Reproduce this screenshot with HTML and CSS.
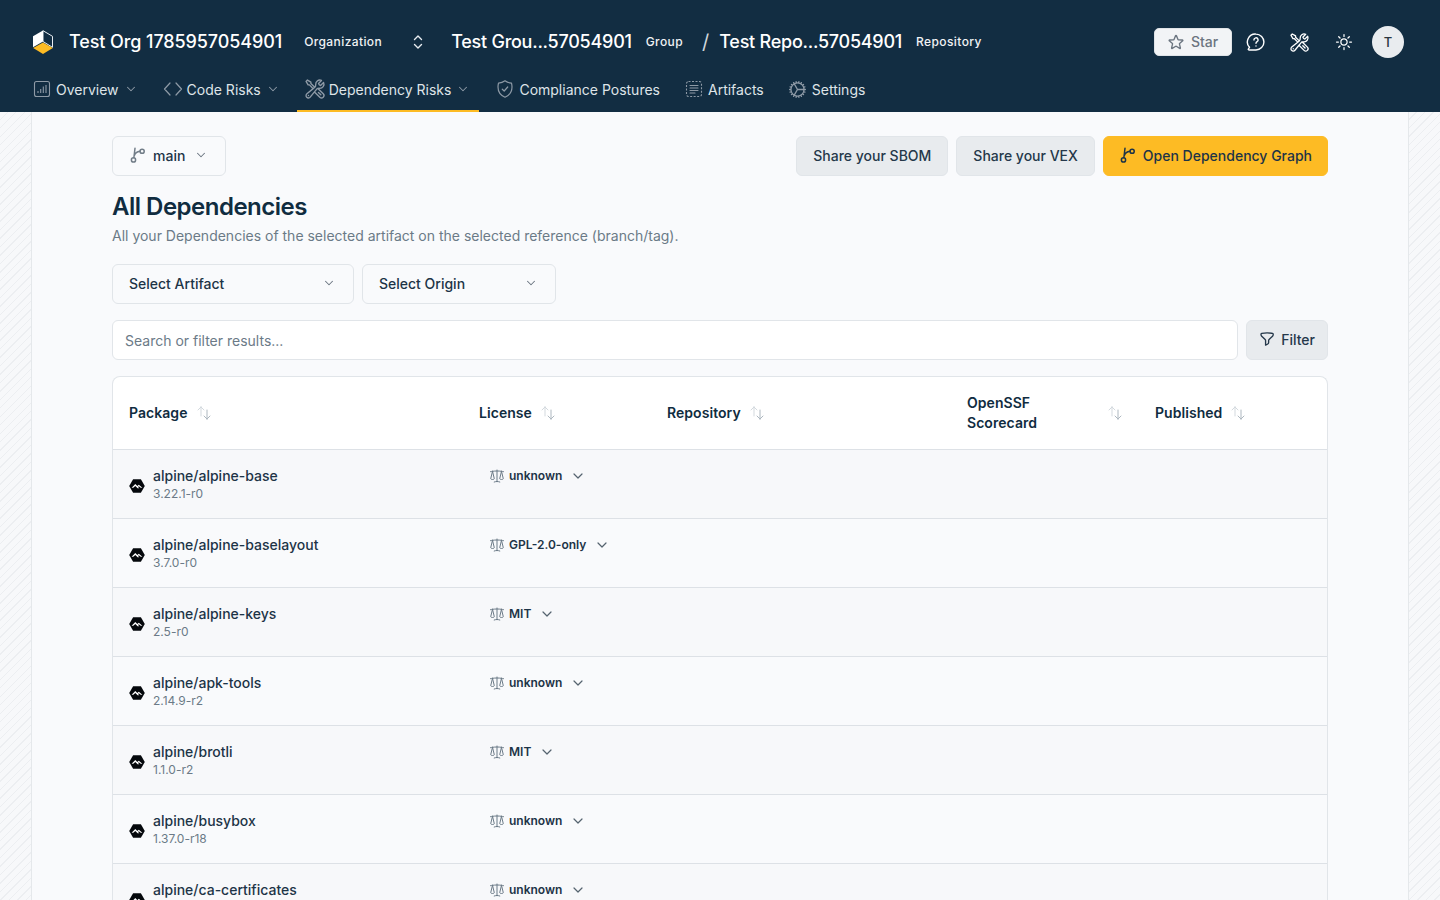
FILE: index.html
```html
<!DOCTYPE html>
<html lang="en">
<head>
    <meta charset="UTF-8">
    <meta name="viewport" content="width=device-width, initial-scale=1.0">
    <title>All Dependencies</title>
    <link rel="stylesheet" href="styles.css">
</head>
<body>
    <svg class="defs" width="0" height="0">
        <defs>
            <symbol id="chev" viewBox="0 0 20 20"><path d="M5 7.500l5 5 5-5" fill="none" stroke="currentColor" stroke-width="1.500" stroke-linecap="round" stroke-linejoin="round"/></symbol>
            <symbol id="branch" viewBox="0 0 24 24"><g fill="none" stroke="currentColor" stroke-width="2"><circle cx="6" cy="18.500" r="2.800"/><circle cx="17.500" cy="7" r="2.800"/><path d="M6.500 15.700L8 3M7.300 12.500c.8-3 3.500-5 7.400-5.500" stroke-linecap="round"/></g></symbol>
            <symbol id="sort" viewBox="0 0 24 24"><g fill="none" stroke-width="1.500" stroke-linecap="round" stroke-linejoin="round"><path d="M3 7.500L7.500 3M7.500 3L12 7.500M7.500 3v13.500" stroke="#d3d9de"/><path d="M21 16.500L16.500 21M16.500 21L12 16.500M16.500 21V7.500" stroke="#aeb8c0"/></g></symbol>
            <symbol id="scale" viewBox="0 0 24 24"><path fill="none" stroke="currentColor" stroke-width="1.500" stroke-linecap="round" stroke-linejoin="round" d="M12 3v17.250m0 0c-1.472 0-2.882.265-4.185.75M12 20.250c1.472 0 2.882.265 4.185.75M18.750 4.970A48.416 48.416 0 0 0 12 4.500c-2.291 0-4.545.16-6.750.47m13.500 0c1.010.143 2.010.317 3 .52m-3-.52 2.620 10.726c.122.499-.106 1.028-.589 1.202a5.988 5.988 0 0 1-2.031.352 5.988 5.988 0 0 1-2.031-.352c-.483-.174-.711-.703-.59-1.202L18.750 4.971Zm-16.500.52c.99-.203 1.990-.377 3-.52m0 0 2.620 10.726c.122.499-.106 1.028-.589 1.202a5.989 5.989 0 0 1-2.031.352 5.989 5.989 0 0 1-2.031-.352c-.483-.174-.711-.703-.59-1.202L5.250 4.971Z"/></symbol>
            <symbol id="alpine" viewBox="0 0 16 16"><path d="M4.100 1.300h7.800L15.800 8l-3.900 6.700H4.100L.2 8z" fill="#05080c"/><path d="M2.600 9.800l3.700-3.700 2 2 1.500-1.400 3.600 3.100h-1.700l-1.900-1.500-.8.800 1.300 1.200H8.600L6.300 8 4.300 9.800z" fill="#fff"/></symbol>
            <symbol id="tools" viewBox="0 0 24 24"><path fill="none" stroke="currentColor" stroke-width="1.500" stroke-linecap="round" stroke-linejoin="round" d="M11.420 15.170 17.250 21A2.652 2.652 0 0 0 21 17.250l-5.877-5.877M11.420 15.170l2.496-3.030c.317-.384.74-.626 1.208-.766M11.420 15.170l-4.655 5.653a2.548 2.548 0 1 1-3.586-3.586l6.837-5.630m5.108-.233c.55-.164 1.163-.188 1.743-.14a4.500 4.500 0 0 0 4.486-6.336l-3.276 3.277a3.004 3.004 0 0 1-2.250-2.250l3.276-3.276a4.500 4.500 0 0 0-6.336 4.486c.091 1.076-.071 2.264-.904 2.950l-.102.085m-1.745 1.437L5.909 7.500H4.500L2.250 3.750l1.500-1.500L7.500 4.500v1.409l4.260 4.260m-1.745 1.437 1.745-1.437m6.615 8.206L15.750 15.750M4.867 19.125h.008v.008h-.008v-.008Z"/></symbol>
        </defs>
    </svg>

    <header class="topbar">
        <div class="crumbs">
            <svg class="logo" width="22" height="25" viewBox="0 0 22 25">
                <path d="M11 .7l9.500 5.600v11L11 11.500z" fill="none" stroke="#e8edf1" stroke-width="1"/>
                <path d="M11 .5v11L1 17.300V6.300z" fill="#fff"/>
                <path d="M11 12.500L20.800 18 11 24 1.200 18z" fill="#fdbb24"/>
            </svg>
            <span class="crumb-name crumb-org">Test Org 1785957054901</span>
            <span class="crumb-type crumb-type-org">Organization</span>
            <svg class="updown" width="12" height="16" viewBox="0 0 12 16"><path d="M2.500 5.500L6 2l3.500 3.500M2.500 10.500L6 14l3.500-3.500" fill="none" stroke="#e8edf1" stroke-width="1.400" stroke-linecap="round" stroke-linejoin="round"/></svg>
            <span class="crumb-name crumb-group crumb-short">Test Grou...57054901</span>
            <span class="crumb-type">Group</span>
            <span class="slash">/</span>
            <span class="crumb-name crumb-short">Test Repo...57054901</span>
            <span class="crumb-type">Repository</span>
        </div>
        <div class="top-actions">
            <button class="star-btn">
                <svg width="18" height="18" viewBox="0 0 24 24"><path fill="none" stroke="currentColor" stroke-width="1.800" stroke-linecap="round" stroke-linejoin="round" d="M11.480 3.499a.562.562 0 0 1 1.040 0l2.125 5.111a.563.563 0 0 0 .475.345l5.518.442c.499.04.701.663.321.988l-4.204 3.602a.563.563 0 0 0-.182.557l1.285 5.385a.562.562 0 0 1-.84.61l-4.725-2.885a.562.562 0 0 0-.586 0L6.982 20.540a.562.562 0 0 1-.84-.61l1.285-5.386a.562.562 0 0 0-.182-.557l-4.204-3.602a.562.562 0 0 1 .321-.988l5.518-.442a.563.563 0 0 0 .475-.345L11.480 3.500Z"/></svg>
                Star
            </button>
            <svg class="top-icon" width="20" height="20" viewBox="0 0 24 24"><g fill="none" stroke="#fff" stroke-width="1.700" stroke-linecap="round" stroke-linejoin="round"><path d="M12 2.500a9.500 9.500 0 0 1 0 19H3.500c-.8 0-1-.7-.6-1.200l1.300-1.900A9.500 9.500 0 0 1 12 2.500z"/><path d="M9.500 9.500a2.500 2.500 0 1 1 3.700 2.200c-.8.400-1.200 1-1.200 1.800M12 16.600v.1"/></g></svg>
            <svg class="top-icon" width="21" height="21"><use href="#tools" color="#fff"/></svg>
            <svg class="top-icon" width="20" height="20" viewBox="0 0 24 24"><path fill="none" stroke="#fff" stroke-width="1.500" stroke-linecap="round" stroke-linejoin="round" d="M12 3v2.250m6.364.386-1.591 1.591M21 12h-2.250m-.386 6.364-1.591-1.591M12 18.750V21m-4.773-4.227-1.591 1.591M5.250 12H3m4.227-4.773L5.636 5.636M15.750 12a3.750 3.750 0 1 1-7.500 0 3.750 3.750 0 0 1 7.500 0Z"/></svg>
            <div class="avatar">T</div>
        </div>
        <nav class="tabs">
            <a class="tab tab-overview">
                <svg width="18" height="18" viewBox="0 0 18 18"><g fill="none" stroke="currentColor" stroke-width="1.100"><rect x="1.500" y="1.500" width="15" height="15" rx="2"/><path d="M5 13v-2M7.700 13V9M10.300 13V6.500M13 13V5"/></g></svg>
                Overview <svg class="tab-chev"><use href="#chev"/></svg>
            </a>
            <a class="tab">
                <svg class="code-icon" width="20" height="20" viewBox="0 0 20 20"><path fill="none" stroke="currentColor" stroke-width="1.200" stroke-linecap="round" stroke-linejoin="round" d="M7 4L1.500 10 7 16M13 4l5.500 6-5.500 6"/></svg>
                Code Risks <svg class="tab-chev"><use href="#chev"/></svg>
            </a>
            <a class="tab tab-active">
                <svg class="tab-big" width="22" height="22"><use href="#tools"/></svg>
                Dependency Risks <svg class="tab-chev"><use href="#chev"/></svg>
            </a>
            <a class="tab tab-plain">
                <svg width="18" height="18" viewBox="0 0 18 18"><path fill="none" stroke="currentColor" stroke-width="1.200" stroke-linecap="round" stroke-linejoin="round" d="M9 .8c2 1.500 4 2.200 6.500 2.400.3 1.200.5 2.500.5 3.800 0 4.700-2.900 8.500-7 10.200C4.900 15.500 2 11.700 2 7c0-1.300.2-2.600.5-3.800C5 3 7 2.300 9 .8zM6.300 9.200L8.200 11l3.500-4"/></svg>
                Compliance Postures
            </a>
            <a class="tab tab-plain">
                <svg width="18" height="18" viewBox="0 0 18 18"><g fill="none" stroke="currentColor" stroke-width="1.100"><rect x="1.500" y="1.500" width="15" height="15" rx="2" stroke-dasharray="2 1.500"/><path d="M5 5.500h8M5 8h8M5 10.500h8M5 13h5" stroke-linecap="round"/></g></svg>
                Artifacts
            </a>
            <a class="tab">
                <svg class="cog" width="21" height="21" viewBox="0 0 24 24"><path fill="none" stroke="currentColor" stroke-width="1.500" stroke-linecap="round" stroke-linejoin="round" d="M4.500 12a7.500 7.500 0 0 0 15 0m-15 0a7.500 7.500 0 1 1 15 0m-15 0H3m16.500 0H21m-1.500 0H12m-8.457 3.077 1.410-.513m14.095-5.130 1.410-.513M5.106 17.785l1.150-.964m11.490-9.642 1.149-.964M7.501 19.795l.75-1.300m7.500-12.990.75-1.300m-6.063 16.658.26-1.477m2.605-14.772.26-1.477m0 17.726-.26-1.477M10.698 4.614l-.26-1.477M16.500 19.794l-.75-1.299M7.500 4.205 12 12m6.894 5.785-1.149-.964M6.256 7.178l-1.150-.964m15.352 8.864-1.410-.513M4.954 9.435l-1.410-.514M12.002 12l-3.750 6.495"/></svg>
                Settings
            </a>
        </nav>
    </header>

    <div class="page">
        <main class="panel">
            <div class="toolbar">
                <button class="select select-branch">
                    <svg class="branch-icon" width="18" height="18"><use href="#branch"/></svg>
                    main
                    <svg class="sel-chev"><use href="#chev"/></svg>
                </button>
                <div class="toolbar-right">
                    <button class="btn">Share your SBOM</button>
                    <button class="btn">Share your VEX</button>
                    <button class="btn btn-primary">
                        <svg width="18" height="18"><use href="#branch"/></svg>
                        Open Dependency Graph
                    </button>
                </div>
            </div>

            <h1 class="title">All Dependencies</h1>
            <p class="subtitle">All your Dependencies of the selected artifact on the selected reference (branch/tag).</p>

            <div class="selects">
                <button class="select select-artifact">Select Artifact <svg class="sel-chev"><use href="#chev"/></svg></button>
                <button class="select select-origin">Select Origin <svg class="sel-chev"><use href="#chev"/></svg></button>
            </div>

            <div class="search-row">
                <div class="search">Search or filter results...</div>
                <button class="btn btn-filter">
                    <svg width="18" height="18" viewBox="0 0 24 24"><path fill="none" stroke="currentColor" stroke-width="2" stroke-linecap="round" stroke-linejoin="round" d="M12 3c2.755 0 5.455.232 8.083.678.533.09.917.556.917 1.096v1.044a2.250 2.250 0 0 1-.659 1.591l-5.432 5.432a2.250 2.250 0 0 0-.659 1.591v2.927a2.250 2.250 0 0 1-1.244 2.013L9.750 21v-6.568a2.250 2.250 0 0 0-.659-1.591L3.659 7.409A2.250 2.250 0 0 1 3 5.818V4.774c0-.54.384-1.006.917-1.096A48.320 48.320 0 0 1 12 3Z"/></svg>
                    Filter
                </button>
            </div>

            <div class="table-wrap">
                <table class="deps">
                    <colgroup>
                        <col class="col-package"><col class="col-license"><col class="col-repo"><col class="col-score"><col class="col-published">
                    </colgroup>
                    <thead>
                        <tr>
                            <th><span class="th-in">Package <svg class="sort"><use href="#sort"/></svg></span></th>
                            <th><span class="th-in">License <svg class="sort"><use href="#sort"/></svg></span></th>
                            <th><span class="th-in">Repository <svg class="sort"><use href="#sort"/></svg></span></th>
                            <th><span class="th-in th-split"><span>OpenSSF<br>Scorecard</span> <svg class="sort"><use href="#sort"/></svg></span></th>
                            <th><span class="th-in">Published <svg class="sort"><use href="#sort"/></svg></span></th>
                        </tr>
                    </thead>
                    <tbody>
                        <tr>
                            <td><div class="pkg"><svg class="pkg-icon"><use href="#alpine"/></svg><div><div class="pkg-name">alpine/alpine-base</div><div class="pkg-ver">3.22.1-r0</div></div></div></td>
                            <td><div class="lic"><svg class="lic-icon"><use href="#scale"/></svg>unknown<svg class="lic-chev"><use href="#chev"/></svg></div></td>
                            <td></td><td></td><td></td>
                        </tr>
                        <tr>
                            <td><div class="pkg"><svg class="pkg-icon"><use href="#alpine"/></svg><div><div class="pkg-name">alpine/alpine-baselayout</div><div class="pkg-ver">3.7.0-r0</div></div></div></td>
                            <td><div class="lic"><svg class="lic-icon"><use href="#scale"/></svg>GPL-2.0-only<svg class="lic-chev"><use href="#chev"/></svg></div></td>
                            <td></td><td></td><td></td>
                        </tr>
                        <tr>
                            <td><div class="pkg"><svg class="pkg-icon"><use href="#alpine"/></svg><div><div class="pkg-name">alpine/alpine-keys</div><div class="pkg-ver">2.5-r0</div></div></div></td>
                            <td><div class="lic"><svg class="lic-icon"><use href="#scale"/></svg>MIT<svg class="lic-chev"><use href="#chev"/></svg></div></td>
                            <td></td><td></td><td></td>
                        </tr>
                        <tr>
                            <td><div class="pkg"><svg class="pkg-icon"><use href="#alpine"/></svg><div><div class="pkg-name">alpine/apk-tools</div><div class="pkg-ver">2.14.9-r2</div></div></div></td>
                            <td><div class="lic"><svg class="lic-icon"><use href="#scale"/></svg>unknown<svg class="lic-chev"><use href="#chev"/></svg></div></td>
                            <td></td><td></td><td></td>
                        </tr>
                        <tr>
                            <td><div class="pkg"><svg class="pkg-icon"><use href="#alpine"/></svg><div><div class="pkg-name">alpine/brotli</div><div class="pkg-ver">1.1.0-r2</div></div></div></td>
                            <td><div class="lic"><svg class="lic-icon"><use href="#scale"/></svg>MIT<svg class="lic-chev"><use href="#chev"/></svg></div></td>
                            <td></td><td></td><td></td>
                        </tr>
                        <tr>
                            <td><div class="pkg"><svg class="pkg-icon"><use href="#alpine"/></svg><div><div class="pkg-name">alpine/busybox</div><div class="pkg-ver">1.37.0-r18</div></div></div></td>
                            <td><div class="lic"><svg class="lic-icon"><use href="#scale"/></svg>unknown<svg class="lic-chev"><use href="#chev"/></svg></div></td>
                            <td></td><td></td><td></td>
                        </tr>
                        <tr>
                            <td><div class="pkg"><svg class="pkg-icon"><use href="#alpine"/></svg><div><div class="pkg-name">alpine/ca-certificates</div><div class="pkg-ver">&nbsp;</div></div></div></td>
                            <td><div class="lic"><svg class="lic-icon"><use href="#scale"/></svg>unknown<svg class="lic-chev"><use href="#chev"/></svg></div></td>
                            <td></td><td></td><td></td>
                        </tr>
                    </tbody>
                </table>
            </div>
        </main>
    </div>
</body>
</html>
```

FILE: styles.css
```css
* {
    box-sizing: border-box;
}
html, body {
    height: 100%;
}
body {
    margin: 0;
    height: 900px;
    overflow: hidden;
    font-family: 'Inter', 'Liberation Sans', sans-serif;
    font-size: 14px;
    color: #102c40;
    background: #f7f8fa;
}
button {
    font-family: inherit;
    cursor: pointer;
}
.defs {
    position: absolute;
}

/* top bar */
.topbar {
    height: 112px;
    background: #122d42;
    padding: 26px 36px 0 32px;
    display: grid;
    grid-template-columns: 1fr auto;
    grid-template-rows: 32px 1fr;
    color: #fff;
}
.crumbs {
    display: flex;
    align-items: center;
}
.logo {
    margin-right: 15px;
}
.crumb-name {
    font-size: 18px;
    font-weight: 500;
    white-space: nowrap;
    letter-spacing: -0.1px;
    padding-bottom: 1px;
}
.crumb-short {
    letter-spacing: -0.25px;
}
.crumb-type {
    font-size: 12px;
    font-weight: 500;
    margin-left: 14px;
    color: #f1f3f5;
    letter-spacing: 0.4px;
    padding-bottom: 1px;
}
.crumb-type-org {
    margin-left: 22px;
}
.updown {
    margin-left: 30px;
}
.crumb-group {
    margin-left: 27px;
}
.slash {
    margin: 0 10px 0 19px;
    font-size: 20px;
    color: #cfd6dc;
}
.top-actions {
    display: flex;
    align-items: center;
}
.star-btn {
    width: 78px;
    height: 28px;
    display: flex;
    align-items: center;
    justify-content: center;
    gap: 6px;
    background: #f2f4f6;
    border: 1px solid #dfe3e7;
    border-radius: 5px;
    color: #6b7580;
    font-size: 14px;
    font-weight: 500;
    padding: 0 0 1px;
}
.top-icon {
    margin-left: 14px;
    margin-right: 9.5px;
    display: block;
}
.top-icon + .top-icon {
    margin-left: 14px;
}
.avatar {
    width: 32px;
    height: 32px;
    margin-left: 9px;
    border-radius: 50%;
    background: #e9ecef;
    color: #2b3640;
    font-size: 13px;
    font-weight: 500;
    display: flex;
    align-items: center;
    justify-content: center;
}
.tabs {
    grid-column: 1 / 3;
    display: flex;
    align-items: stretch;
    gap: 8px;
    margin-top: 6px;
    margin-left: -8px;
}
.tab {
    display: flex;
    align-items: center;
    gap: 5px;
    padding: 4px 9px 0 9px;
    font-size: 14px;
    color: #dfe4e8;
    border-bottom: 2px solid transparent;
}
.tab svg {
    color: #8e9aa6;
    flex: none;
}
.tab-overview,
.tab-plain {
    padding-right: 8px;
}
.tab .code-icon {
    margin-right: -1px;
}
.tab .tab-big {
    margin: 0 -2px;
}
.tab .cog {
    margin: 0 -1.5px;
}
.tab-active {
    border-bottom-color: #fdbb24;
}
.tab-chev {
    width: 14px;
    height: 14px;
}

/* page frame with hatched gutters */
.page {
    height: 788px;
    padding: 0 31px;
    background: repeating-linear-gradient(135deg, #f7f8fa 0, #f7f8fa 5px, #eceef1 5px, #eceef1 6px);
}
.panel {
    height: 100%;
    background: #f9fafc;
    border-left: 1px solid #e5e8eb;
    border-right: 1px solid #e5e8eb;
    padding: 24px 80px 0;
    overflow: hidden;
}
.toolbar {
    display: flex;
    justify-content: space-between;
    align-items: center;
}
.toolbar-right {
    display: flex;
    gap: 8px;
}
.select {
    height: 40px;
    display: flex;
    align-items: center;
    background: transparent;
    border: 1px solid #e1e5e9;
    border-radius: 6px;
    padding: 0 17px 2px 16px;
    color: #1d3447;
    font-size: 14px;
    font-weight: 500;
}
.sel-chev {
    width: 14px;
    height: 14px;
    margin-left: auto;
    color: #6b7580;
}
.select-branch {
    width: 114px;
    gap: 6px;
}
.branch-icon {
    color: #727d88;
}
.btn {
    height: 40px;
    display: flex;
    align-items: center;
    gap: 6px;
    padding: 0 16px 2px;
    background: #e8ebee;
    border: 1px solid #e1e5e9;
    border-radius: 6px;
    color: #25384a;
    font-size: 14px;
    font-weight: 500;
}
.btn-primary {
    padding: 0 15px 2px;
    background: #fdbb24;
    border-color: #fdbb24;
    color: #1d3447;
}
.title {
    margin: 17px 0 0;
    font-size: 24px;
    line-height: 28px;
    font-weight: 600;
    letter-spacing: -0.5px;
}
.subtitle {
    margin: 5px 0 0;
    font-size: 14px;
    line-height: 20px;
    color: #6b7a87;
}
.selects {
    display: flex;
    gap: 8px;
    margin-top: 18px;
}
.select-artifact {
    width: 242px;
}
.select-origin {
    width: 194px;
}
.search-row {
    display: flex;
    gap: 8px;
    margin-top: 16px;
}
.search {
    flex: 1;
    height: 40px;
    display: flex;
    align-items: center;
    padding: 0 12px;
    background: #fff;
    border: 1px solid #e1e5e9;
    border-radius: 6px;
    color: #6b7a87;
}
.btn-filter {
    width: 82px;
    padding: 0 12px 2px;
}

/* table */
.table-wrap {
    margin-top: 16px;
    background: #fff;
    border: 1px solid #e1e5e9;
    border-bottom: none;
    border-radius: 8px 8px 0 0;
    overflow: hidden;
}
.deps {
    width: 100%;
    table-layout: fixed;
    border-collapse: collapse;
}
.col-package { width: 350px; }
.col-license { width: 188px; }
.col-repo { width: 300px; }
.col-score { width: 188px; }
.col-published { width: 188px; }
.deps th {
    height: 72px;
    padding: 0 16px;
    text-align: left;
    font-size: 14px;
    font-weight: 600;
    line-height: 20px;
    letter-spacing: 0.05px;
    color: #102c40;
    border-bottom: 1px solid #dde1e6;
}
.th-in {
    display: flex;
    align-items: center;
    gap: 8px;
}
.th-split {
    justify-content: space-between;
}
.sort {
    width: 16px;
    height: 16px;
}
.deps td {
    height: 69px;
    padding: 16px 16px 0;
    vertical-align: top;
    border-bottom: 1px solid #dde1e6;
}
.deps tbody tr:nth-child(odd) {
    background: #f7f8fa;
}
.deps tbody tr:nth-child(even) {
    background: #f9fafc;
}
.pkg {
    display: flex;
    align-items: center;
    gap: 8px;
}
.pkg-icon {
    width: 16px;
    height: 16px;
    margin-top: 4px;
    flex: none;
}
.pkg-name {
    font-size: 14px;
    line-height: 20px;
    font-weight: 500;
    color: #1d3447;
}
.pkg-ver {
    font-size: 12px;
    line-height: 16px;
    color: #6b7a87;
}
.lic {
    display: flex;
    align-items: center;
    padding-left: 10px;
    height: 20px;
    font-size: 12px;
    font-weight: 600;
    color: #1d3447;
}
.lic-icon {
    width: 16px;
    height: 16px;
    margin-right: 4px;
    color: #6b7a87;
    flex: none;
}
.lic-chev {
    width: 16px;
    height: 16px;
    margin-left: 8px;
    color: #55636f;
}
```
